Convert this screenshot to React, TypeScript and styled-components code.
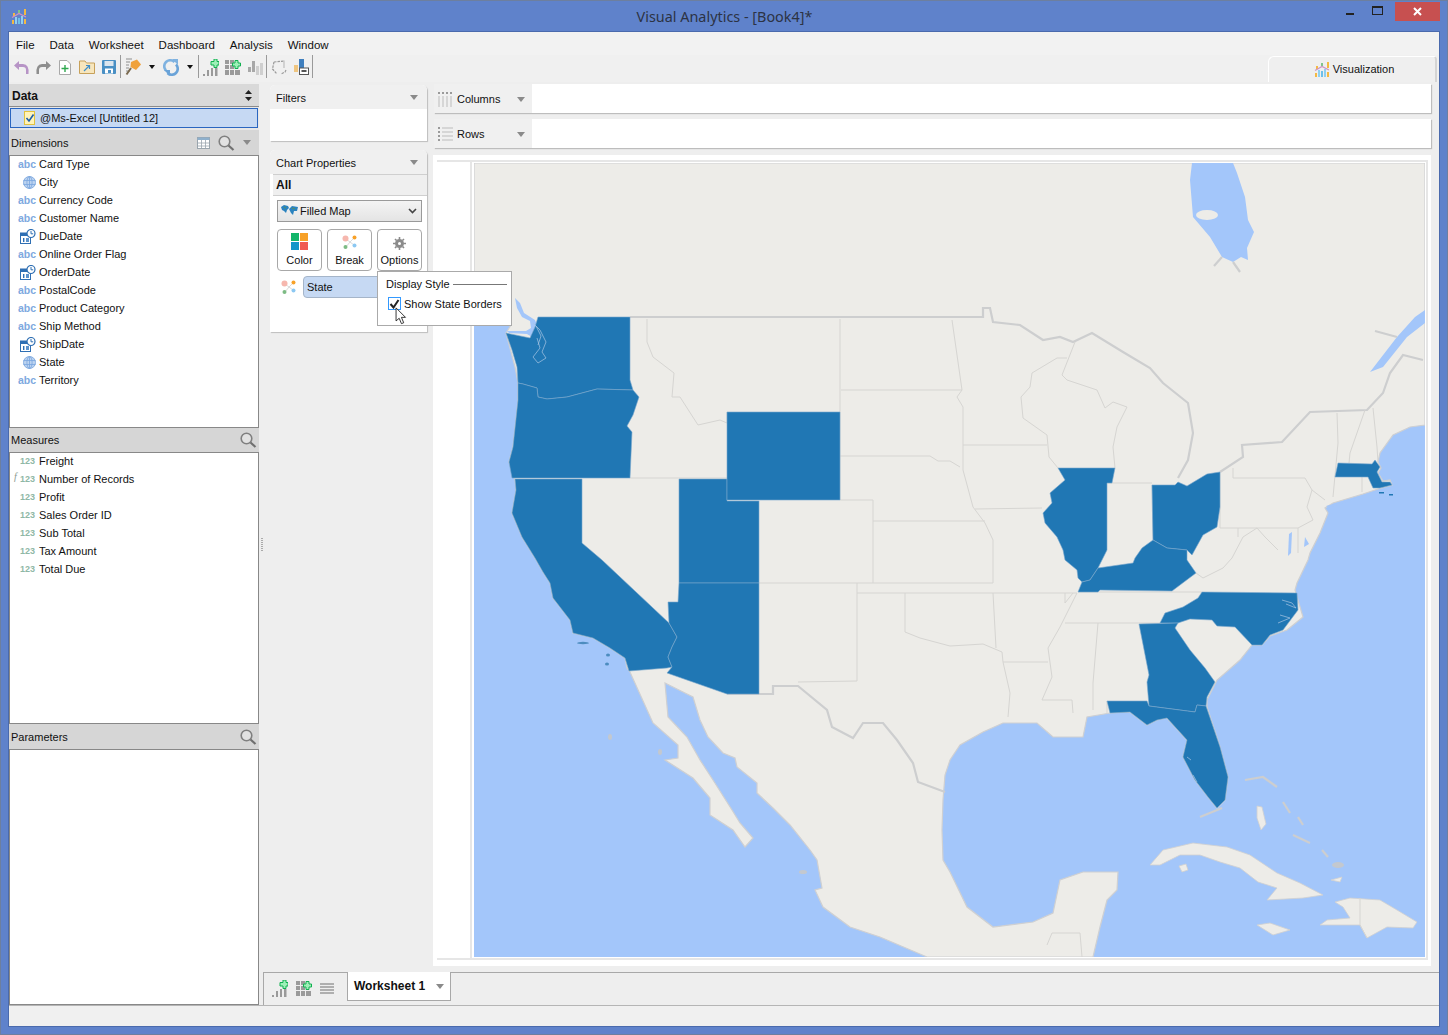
import React from 'react'
import styled, { createGlobalStyle } from 'styled-components'

const Global = createGlobalStyle`
  html, body {
    margin: 0;
    padding: 0;
    width: 1448px;
    height: 1035px;
    overflow: hidden;
    background: #5f82cb;
    font-family: "Liberation Sans", Arial, sans-serif;
    font-size: 11px;
    color: #111;
  }
`

const Frame = styled.div`
  display: flex;
  flex-direction: column;
  width: 1448px;
  height: 1035px;
  box-sizing: border-box;
  border: 1px solid #6d7f9f;
  background: #5f82cb;
`
const TitleBar = styled.div`
  display: flex;
  align-items: flex-start;
  position: relative;
  height: 30px;
  padding-left: 10px;
  flex: none;
`
const TitleLogo = styled.div`
  padding-top: 7px;
`
const TitleText = styled.div`
  flex: 1;
  text-align: center;
  font-family: "Noto Sans", "Liberation Sans", sans-serif;
  font-size: 14.4px;
  line-height: 31px;
  color: #2c3344;
  padding-left: 84px;
`
const WinButtons = styled.div`
  display: flex;
  align-items: flex-start;
`
const WinBtn = styled.div`
  width: 26px;
  height: 19px;
  display: flex;
  align-items: center;
  justify-content: center;
`
const CloseBtn = styled(WinBtn)`
  width: 45px;
  margin: 1px 7px 0 5px;
  background: #c75050;
`
const Content = styled.div`
  flex: 1;
  display: flex;
  flex-direction: column;
  min-height: 0;
  margin: 0 7px 7px 7px;
  border: 1px solid #4a6aad;
  background: #eeeeee;
`
const MenuBar = styled.div`
  display: flex;
  height: 23px;
  flex: none;
  align-items: center;
  padding: 2px 0 0 7px;
  box-sizing: border-box;
  gap: 15px;
  background: #f2f2f2;
  font-size: 11.5px;
  color: #111;
`
const ToolBar = styled.div`
  display: flex;
  height: 27px;
  flex: none;
  align-items: flex-start;
  padding-left: 1px;
  background: #f0f0f0;
  position: relative;
`
const Tool = styled.div`
  width: 22px;
  height: 24px;
  display: flex;
  align-items: center;
  justify-content: center;
`
const ToolDrop = styled.div<{ $w: number }>`
  width: ${p => p.$w}px;
  height: 24px;
  display: flex;
  align-items: center;
  justify-content: center;
  &::after {
    content: '';
    border: 3px solid transparent;
    border-top: 4px solid #111;
    margin-top: 3px;
  }
`
const ToolSep = styled.div`
  width: 1px;
  height: 23px;
  margin: 0 1px 0 0;
  background: #9a9a9a;
`
const VizTab = styled.div`
  margin-left: auto;
  margin-right: 2px;
  width: 169px;
  height: 26px;
  margin-top: 1px;
  box-sizing: border-box;
  padding: 0 0 2px 4px;
  border-top: 1px solid #fff;
  border-left: 1px solid #fff;
  border-right: 2px solid #d4d4d4;
  border-radius: 6px 4px 0 0;
  display: flex;
  align-items: center;
  justify-content: center;
  gap: 3px;
  font-size: 11px;
  background: #efefef;
`
const Main = styled.div`
  flex: 1;
  display: flex;
  min-height: 0;
  padding-top: 2px;
`
const LeftPanel = styled.div`
  width: 250px;
  flex: none;
  display: flex;
  flex-direction: column;
`
const DataHeader = styled.div`
  height: 23px;
  flex: none;
  display: flex;
  align-items: center;
  justify-content: space-between;
  padding: 1px 7px 0 3px;
  background: #d9d9d9;
  font-weight: 700;
  font-size: 12px;
  border-bottom: 1px solid #8b8b8b;
  box-sizing: border-box;
`
const SourceWrap = styled.div`
  height: 23px;
  flex: none;
  box-sizing: border-box;
  padding: 1px 1px 2px 1px;
  background: #e7e7e7;
`
const SourceRow = styled.div`
  height: 100%;
  box-sizing: border-box;
  display: flex;
  align-items: center;
  gap: 5px;
  padding-left: 13px;
  background: #c6d9f3;
  border: 1px solid #2a66c0;
  font-size: 11px;
`
const SectionHeader = styled.div<{ $h: number }>`
  height: ${p => p.$h}px;
  flex: none;
  display: flex;
  align-items: center;
  justify-content: space-between;
  box-sizing: border-box;
  padding: 0 2px 0 2px;
  background: #d6d6d6;
`
const HeaderTools = styled.div`
  display: flex;
  align-items: center;
  gap: 8px;
  margin-right: 6px;
`
const ListBox = styled.div<{ $h?: number }>`
  height: ${p => (p.$h ? `${p.$h}px` : 'auto')};
  flex: ${p => (p.$h ? 'none' : '1')};
  box-sizing: border-box;
  border: 1px solid #888;
  background: #fff;
`
const Row = styled.div`
  height: 18px;
  display: flex;
  align-items: center;
  box-sizing: border-box;
  padding: 0 0 2px 5px;
  white-space: nowrap;
  position: relative;
`
const TypeSlot = styled.div`
  width: 24px;
  flex: none;
  display: flex;
  justify-content: flex-end;
  padding-right: 3px;
  box-sizing: border-box;
`
const AbcTag = styled.span`
  color: #7ea9e0;
  font-size: 10.5px;
  line-height: 12px;
  font-weight: 700;
`
const NumTag = styled.span`
  color: #8fb8a6;
  font-size: 9px;
  font-weight: 700;
  line-height: 12px;
  position: relative;
  margin-right: 1px;
`
const FxTag = styled.span`
  position: absolute;
  left: -6px;
  top: -2px;
  color: #8a9a90;
  font-family: "Liberation Serif", serif;
  font-style: italic;
  font-size: 10px;
  font-weight: 400;
`
const Splitter = styled.div`
  width: 5px;
  flex: none;
  display: flex;
  align-items: center;
  justify-content: center;
  &::after {
    content: '';
    width: 2px;
    height: 14px;
    background: repeating-linear-gradient(#aaa 0 1px, transparent 1px 2px);
  }
`
const RightArea = styled.div`
  flex: 1;
  min-width: 0;
  display: flex;
  flex-direction: column;
`
const Workspace = styled.div`
  flex: 1;
  min-height: 0;
  display: flex;
  padding-left: 6px;
`
const SideColumn = styled.div`
  width: 157px;
  flex: none;
  padding-top: 1px;
  display: flex;
  flex-direction: column;
  gap: 9px;
  position: relative;
`
const Card = styled.div<{ $h: number }>`
  height: ${p => p.$h}px;
  flex: none;
  box-sizing: border-box;
  background: #fff;
  border-radius: 5px 5px 0 0;
  box-shadow: 1px 1px 1px #bdbdbd;
`
const CardHead = styled.div`
  height: 24px;
  display: flex;
  align-items: center;
  justify-content: space-between;
  padding: 1px 9px 0 6px;
  background: #f0f0f0;
  border-radius: 5px 5px 0 0;
  box-sizing: border-box;
`
const CardArrow = styled.span`
  border: 4px solid transparent;
  border-top: 5px solid #8a8a8a;
  margin-top: 4px;
`
const AllRow = styled.div`
  height: 22px;
  margin-left: 3px;
  display: flex;
  align-items: center;
  padding-left: 3px;
  background: #efefef;
  font-weight: 700;
  font-size: 12px;
  border-top: 1px solid #cfcfcf;
  border-bottom: 1px solid #cfcfcf;
  box-sizing: border-box;
`
const PropsBody = styled.div`
  padding: 4px 5px 0 7px;
`
const SelectBox = styled.div`
  height: 22px;
  box-sizing: border-box;
  border: 1px solid #9a9a9a;
  background: linear-gradient(#f4f4f4, #e4e4e4);
  display: flex;
  align-items: center;
  padding: 0 4px 0 3px;
  gap: 2px;
`
const Spread = styled.span`
  flex: 1;
`
const ButtonRow = styled.div`
  display: flex;
  gap: 5px;
  margin-top: 7px;
`
const PropButton = styled.div`
  width: 45px;
  height: 42px;
  box-sizing: border-box;
  border: 1px solid #a8a8a8;
  border-radius: 4px;
  display: flex;
  flex-direction: column;
  align-items: center;
  justify-content: flex-end;
  gap: 4px;
  padding-bottom: 4px;
  background: #fff;
`
const BreakRow = styled.div`
  display: flex;
  align-items: center;
  gap: 6px;
  margin-top: 5px;
  padding-left: 4px;
`
const Pill = styled.div`
  flex: 1;
  height: 22px;
  box-sizing: border-box;
  padding-left: 3px;
  margin-right: 20px;
  display: flex;
  align-items: center;
  background: #c6d9f3;
  border: 1px solid #a5b5c9;
  border-radius: 4px 0 0 4px;
`
const Popup = styled.div`
  position: absolute;
  left: 107px;
  top: 187px;
  width: 135px;
  height: 55px;
  box-sizing: border-box;
  padding: 4px 4px 0 8px;
  background: #fff;
  border: 1px solid #aaa;
  z-index: 5;
`
const PopTitle = styled.div`
  display: flex;
  align-items: center;
  gap: 3px;
  height: 16px;
  white-space: nowrap;
  &::after {
    content: '';
    flex: 1;
    height: 1px;
    background: #777;
  }
`
const CheckRow = styled.div`
  display: flex;
  align-items: center;
  gap: 3px;
  margin-top: 5px;
  padding-left: 2px;
  white-space: nowrap;
`
const CheckBox = styled.span`
  width: 13px;
  height: 13px;
  flex: none;
  box-sizing: border-box;
  border: 1px solid #3399ff;
  display: flex;
  align-items: center;
  justify-content: center;
`
const Pointer = styled.svg`
  position: absolute;
  left: 17px;
  top: 35px;
`
const ChartColumn = styled.div`
  flex: 1;
  min-width: 0;
  margin-left: 6px;
  margin-right: 8px;
  display: flex;
  flex-direction: column;
  gap: 6px;
`
const Shelf = styled.div`
  height: 29px;
  flex: none;
  margin-left: 1px;
  display: flex;
  background: #fff;
  box-shadow: 1px 1px 1px #bdbdbd;
`
const ShelfLabel = styled.div`
  width: 98px;
  flex: none;
  display: flex;
  align-items: center;
  gap: 4px;
  box-sizing: border-box;
  padding: 1px 7px 0 4px;
  background: #f0f0f0;
`
const ChartPanel = styled.div`
  height: 811px;
  flex: none;
  margin-top: 1px;
  box-sizing: border-box;
  padding: 5px 3px 0 4px;
  background: #fff;
`
const ChartInner = styled.div`
  display: flex;
  height: 800px;
  box-sizing: border-box;
  border-top: 2px solid #e6e6e6;
  border-bottom: 2px solid #e6e6e6;
  border-right: 2px solid #e6e6e6;
  padding: 1px 1px 0 0;
`
const AxisStrip = styled.div`
  width: 33px;
  flex: none;
  border-right: 2px solid #e6e6e6;
  margin: -1px 2px 0 0;
`
const MapSvg = styled.svg`
  display: block;
  flex: none;
`
const TabBar = styled.div`
  height: 33px;
  flex: none;
  display: flex;
  align-items: flex-start;
  margin-left: -1px;
  padding-left: 8px;
  box-sizing: border-box;
  border-top: 1px solid #a8a8a8;
  border-left: 1px solid #a8a8a8;
`
const TabIcons = styled.div`
  display: flex;
  gap: 8px;
  height: 30px;
  align-items: center;
  width: 75px;
`
const SheetTab = styled.div`
  width: 104px;
  height: 29px;
  margin-top: -1px;
  box-sizing: border-box;
  background: #fff;
  border: 1px solid #a8a8a8;
  border-top: none;
  display: flex;
  align-items: center;
  justify-content: space-between;
  padding: 0 6px 0 6px;
  font-weight: 700;
  font-size: 12px;
`
const StatusBar = styled.div`
  height: 21px;
  flex: none;
  background: #f0f0f0;
  border-top: 1px solid #b5b5b5;
  box-sizing: border-box;
`

const VizLogo = ({ size = 16 }: { size?: number }) => (
  <svg width={size} height={size} viewBox="0 0 16 16">
    <rect x="1" y="12" width="2" height="4" fill="#f4b942" />
    <rect x="4" y="9" width="2" height="7" fill="#8fd0f0" />
    <rect x="7" y="10" width="2" height="6" fill="#6ec0ea" />
    <rect x="10" y="8" width="2" height="8" fill="#8fd0f0" />
    <rect x="13" y="11" width="2" height="5" fill="#f4b942" />
    <rect x="7" y="2" width="2" height="3" fill="#7fc48a" />
    <rect x="13" y="1" width="2" height="6" fill="#f4b942" />
    <rect x="2" y="5" width="2" height="3" fill="#f4b942" />
    <path d="M1 9.5 L8 5.5 L15 9" fill="none" stroke="#cf93c4" strokeWidth="1.3" />
  </svg>
)

const Undo = ({ color }: { color: string }) => (
  <svg width="17" height="15" viewBox="0 0 17 15">
    <path d="M6 1 L1 5.5 L6 10 V7 H10 Q13 7 13 10 V14 H15.5 Q16.5 4.5 10 4 H6 Z" fill={color} />
  </svg>
)
const Redo = ({ color }: { color: string }) => (
  <svg width="17" height="15" viewBox="0 0 17 15">
    <path d="M11 1 L16 5.5 L11 10 V7 H7 Q4 7 4 10 V14 H1.5 Q0.5 4.5 7 4 H11 Z" fill={color} />
  </svg>
)
const NewDoc = () => (
  <svg width="12" height="15" viewBox="0 0 12 15">
    <path d="M.5.5 H8 L11.5 4 V14.5 H.5 Z" fill="#fff" stroke="#a9a9a9" />
    <path d="M6 5 V12 M2.5 8.5 H9.5" stroke="#2fa84f" strokeWidth="1.4" />
  </svg>
)
const OpenFolder = () => (
  <svg width="16" height="14" viewBox="0 0 16 14">
    <path d="M.5 1 H6 L7.5 3 H15.5 V13.5 H.5 Z" fill="#f7e6bd" stroke="#c7a15a" />
    <path d="M5 11 L10 6 M7 5.5 H10.5 V9" fill="none" stroke="#3f8fc9" strokeWidth="1.2" />
  </svg>
)
const Save = () => (
  <svg width="14" height="14" viewBox="0 0 14 14">
    <rect width="14" height="14" rx="1" fill="#4a90c4" />
    <rect x="2.5" y="1" width="9" height="5" fill="#dce6ee" />
    <rect x="3" y="8.5" width="8" height="5" fill="#fff" />
    <rect x="6" y="10" width="3" height="3" fill="#4a90c4" />
  </svg>
)
const Plug = () => (
  <svg width="17" height="18" viewBox="0 0 17 18">
    <path d="M6 4 L12 1.5 L16 6.5 L11 12 L5.5 9 Z" fill="#f0a23c" />
    <path d="M1 1 H7 M1 4 H5 M1 7 H4 M1 10 H4 M1 13 H5" stroke="#8d8d8d" strokeWidth="1.1" />
    <path d="M6 10 L1.5 16.5" stroke="#7a6a4f" strokeWidth="2" />
  </svg>
)
const Refresh = () => (
  <svg width="16" height="17" viewBox="0 0 16 17">
    <path d="M11.5 3 A6 6 0 0 0 3 11.5" fill="none" stroke="#7fb2e0" strokeWidth="2.6" />
    <path d="M4.5 14 A6 6 0 0 0 13 5.5" fill="none" stroke="#6aa3d8" strokeWidth="2.6" />
    <path d="M9 0 H15 V6 Z" fill="#7fb2e0" />
    <path d="M1 11 H7 V17 Z" fill="#6aa3d8" />
  </svg>
)
const Bars = ({ add }: { add?: boolean }) => (
  <svg width="16" height="17" viewBox="0 0 16 17">
    <rect x="0" y="15" width="2" height="2" fill="#9a9a9a" />
    <rect x="4" y="11" width="2" height="6" fill="#9a9a9a" />
    <rect x="8" y="9" width="2" height="8" fill="#9a9a9a" />
    <rect x="12" y="9" width="2.5" height="8" fill="#9a9a9a" />
    {add && <path d="M8 2.5 H11 V0 H14 V2.5 H16 V6 H14 V8.5 H11 V6 H8 Z" fill="#9ff0b8" stroke="#10b050" strokeWidth="1" />}
  </svg>
)
const GridAdd = () => (
  <svg width="16" height="15" viewBox="0 0 16 15">
    <path d="M0 0 H4 V4 H0 Z M5 0 H9 V4 H5 Z M0 5 H4 V9 H0 Z M5 5 H9 V9 H5 Z M0 10 H4 V15 H0 Z M5 10 H9 V15 H5 Z M10 10 H15 V15 H10 Z" fill="#9a9a9a" />
    <path d="M7.5 3 H10 V.5 H13 V3 H15.5 V6 H13 V8.5 H10 V6 H7.5 Z" fill="#9ff0b8" stroke="#10b050" />
  </svg>
)
const GrayBars = () => (
  <svg width="15" height="15" viewBox="0 0 15 15">
    <rect x="0" y="7" width="3" height="5" fill="#a8a8a8" />
    <rect x="4" y="1" width="3" height="11" fill="#a8a8a8" />
    <rect x="8" y="6" width="3" height="9" fill="#cfcfcf" />
    <rect x="12" y="3" width="3" height="12" fill="#cfcfcf" />
  </svg>
)
const Shape = () => (
  <svg width="16" height="16" viewBox="0 0 16 16">
    <path d="M3 3 L13 2 M3 3 L1.5 10 L6 15 M15 11 L14 13 L10 15" fill="none" stroke="#9a9a9a" strokeWidth="1.2" strokeDasharray="2.5 1" />
    <path d="M13 1.5 V9" stroke="#c4c4c4" strokeWidth="1.4" />
  </svg>
)
const Format = () => (
  <svg width="15" height="16" viewBox="0 0 15 16">
    <rect x="0" y="6" width="4" height="7" fill="#efc57f" />
    <rect x="5" y="0" width="5" height="9" fill="#3f7fbe" />
    <rect x="5.5" y="9" width="9" height="6.5" fill="#fff" stroke="#555" />
    <rect x="7.5" y="11" width="5" height="2" fill="#555" />
  </svg>
)
const TableIcon = () => (
  <svg width="13" height="12" viewBox="0 0 13 12">
    <rect x=".5" y=".5" width="12" height="11" fill="#fff" stroke="#9aa5ad" />
    <rect x=".5" y=".5" width="12" height="2.5" fill="#8fb0cc" />
    <path d="M.5 6 H12.5 M.5 9 H12.5 M4.5 3 V11.5 M8.5 3 V11.5" stroke="#9aa5ad" strokeWidth=".8" />
  </svg>
)
const SearchIcon = () => (
  <svg width="17" height="16" viewBox="0 0 17 16">
    <circle cx="6.5" cy="6.5" r="5.3" fill="#f4f4f4" fillOpacity=".4" stroke="#808080" strokeWidth="1.6" />
    <path d="M10.5 10.5 L15.5 15" stroke="#707070" strokeWidth="2.2" />
  </svg>
)
const GreyArrow = styled.span`
  display: inline-block;
  border: 4px solid transparent;
  border-top: 5px solid #8a8a8a;
  margin-top: 4px;
`
const Globe = () => (
  <svg width="13" height="13" viewBox="0 0 13 13">
    <circle cx="6.5" cy="6.5" r="6" fill="#bcd3f0" stroke="#86aee0" />
    <ellipse cx="6.5" cy="6.5" rx="2.6" ry="6" fill="none" stroke="#7aa6de" strokeWidth=".8" />
    <path d="M.5 4.5 H12.5 M.5 8.5 H12.5 M6.5 .5 V12.5" stroke="#7aa6de" strokeWidth=".8" />
  </svg>
)
const CalClock = () => (
  <svg width="16" height="15" viewBox="0 0 16 15">
    <rect x=".5" y="4" width="10" height="10.5" fill="#fff" stroke="#2f6fb3" />
    <rect x=".5" y="4" width="10" height="3" fill="#2f6fb3" />
    <rect x="3" y="9" width="1.4" height="4" fill="#2f6fb3" />
    <rect x="6" y="9" width="3" height="4" fill="#5d93cc" />
    <circle cx="11" cy="4.5" r="4" fill="#fff" stroke="#2f6fb3" strokeWidth="1.2" />
    <path d="M11 2 V4.8 H13.2" fill="none" stroke="#2f6fb3" />
  </svg>
)
const SourceIcon = () => (
  <svg width="11" height="14" viewBox="0 0 11 14">
    <rect x=".5" y=".5" width="10" height="13" fill="#fff3b8" stroke="#e2c23e" />
    <path d="M2.5 7 L5 10 L9.5 3.5" fill="none" stroke="#1f5fa8" strokeWidth="1.6" />
  </svg>
)
const Updown = () => (
  <svg width="7" height="11" viewBox="0 0 7 11">
    <path d="M3.5 0 L7 4 H0 Z M3.5 11 L0 7 H7 Z" fill="#222" />
  </svg>
)
const ColorIcon = () => (
  <svg width="17" height="17" viewBox="0 0 17 17">
    <rect width="8" height="8" fill="#12b56a" />
    <rect x="9" width="8" height="8" fill="#f7a128" />
    <rect y="9" width="8" height="8" fill="#1195c9" />
    <rect x="9" y="9" width="8" height="8" fill="#f05a50" />
  </svg>
)
const BreakIcon = () => (
  <svg width="16" height="15" viewBox="0 0 16 15">
    <path d="M4 4 L8 7 M12 3 L8 7 M4 12 L8 7 M12 10 L8 7" stroke="#ccc" strokeWidth=".7" />
    <circle cx="3.5" cy="3.5" r="3" fill="#f6b7ae" />
    <circle cx="12.5" cy="2.5" r="2" fill="#f7a128" />
    <circle cx="3.5" cy="12" r="2" fill="#7dbb84" />
    <circle cx="12.5" cy="10.5" r="2" fill="#8cc8f2" />
  </svg>
)
const Gear = () => (
  <svg width="13" height="13" viewBox="0 0 13 13">
    <circle cx="6.5" cy="6.5" r="3" fill="none" stroke="#8b8b8b" strokeWidth="3" />
    <path d="M6.5 0 V13 M0 6.5 H13 M2 2 L11 11 M11 2 L2 11" stroke="#8b8b8b" strokeWidth="1.6" strokeDasharray="2.2 8.6" />
  </svg>
)
const WorldIcon = () => (
  <svg width="17" height="12" viewBox="0 0 17 12">
    <path d="M0 2 L3 0 L7 1 L8 3 L6 5 L5 8 L3 6 L1 5 Z M8 4 L11 1 L17 2 L16 6 L13 6 L12 10 L10 8 L9 6 Z" fill="#2b83bf" />
    <path d="M3 2 L5 3 M11 3 L14 4" stroke="#5a8f5a" strokeWidth="1" />
  </svg>
)
const ColumnsIcon = () => (
  <svg width="15" height="15" viewBox="0 0 15 15">
    {[0, 4, 8, 12].map(x => (
      <g key={x}>
        <rect x={x} y="0" width="2" height="2" fill="#9a9a9a" />
        <rect x={x} y="4" width="2" height="11" fill="#d6d6d6" />
      </g>
    ))}
  </svg>
)
const RowsIcon = () => (
  <svg width="15" height="15" viewBox="0 0 15 15">
    {[0, 4, 8, 12].map(y => (
      <g key={y}>
        <rect x="0" y={y} width="2" height="2" fill="#9a9a9a" />
        <rect x="4" y={y} width="11" height="2" fill="#d6d6d6" />
      </g>
    ))}
  </svg>
)
const ListLines = () => (
  <svg width="14" height="11" viewBox="0 0 14 11">
    <path d="M0 1 H14 M0 4 H14 M0 7 H14 M0 10 H14" stroke="#9a9a9a" strokeWidth="1.6" />
  </svg>
)

type Kind = 'abc' | 'geo' | 'date'
const dimensions: [string, Kind][] = [
  ['Card Type', 'abc'],
  ['City', 'geo'],
  ['Currency Code', 'abc'],
  ['Customer Name', 'abc'],
  ['DueDate', 'date'],
  ['Online Order Flag', 'abc'],
  ['OrderDate', 'date'],
  ['PostalCode', 'abc'],
  ['Product Category', 'abc'],
  ['Ship Method', 'abc'],
  ['ShipDate', 'date'],
  ['State', 'geo'],
  ['Territory', 'abc'],
]
const measures = ['Freight', 'Number of Records', 'Profit', 'Sales Order ID', 'Sub Total', 'Tax Amount', 'Total Due']

const LAND = `474,163 1425,163 1425,425 1410,427 1393,435 1380,453 1378,462 1381,468 1378,473 1383,481 1390,480 1392,485 1378,489 1363,494 1333,503
1325,508 1328,513 1320,533 1310,553 1308,560 1297,583 1295,590 1303,617 1287,630 1270,636 1262,645 1252,645 1240,660 1217,680 1207,700 1207,707 1220,747 1228,777 1225,800 1217,808
1208,797 1195,780 1183,757 1187,740 1167,718 1157,720 1147,725 1130,712 1110,713 1087,717 1083,737 1053,737 1037,723 1003,723 983,732 960,745 950,760 945,775 943,800 942,830 943,860 950,872
967,907 993,927 1033,922 1053,913 1060,880 1083,872 1118,872 1117,890 1107,900 1100,927 1093,957 927,957 880,937 850,927 823,907 815,890 822,888 817,860 810,850 790,825 773,808 757,793 757,783 737,767 735,758 723,753 708,737
700,720 693,697 683,692 665,683 668,717 687,737 700,760 713,780 732,810 740,823 753,838 745,847 733,830 710,815 710,798 693,778 665,760 678,758 678,745 653,723 630,672
627,668 625,658 610,648 593,638 573,633 570,620 553,598 550,583 543,572 535,558 522,537 512,513 516,490 515,480 509,462 513,447 518,400 518,383 515,367 506,333 511,325 500,300 474,285`

const LAKES = [
  '1192,163 1233,163 1237,173 1245,197 1248,220 1254,232 1247,248 1248,260 1241,257 1233,262 1222,257 1210,237 1193,217 1190,180',
  '1370,372 1397,337 1415,317 1425,310 1425,323 1407,337 1383,367',
  '515,298 520,303 524,313 535,320 538,327 534,331 532,337 527,334 509,333 507,331 526,331 531,328 530,321 522,317 517,308',
  '1289,534 1292,532 1291,553 1288,556',
  '1305,537 1309,544 1304,547',
  '1326,506 1345,501 1361,496 1345,503 1329,508',
]
const ISLANDS = [
  '1150,865 1163,850 1193,843 1227,847 1250,855 1277,873 1300,883 1323,895 1303,898 1267,900 1277,888 1258,882 1240,868 1220,862 1200,855 1180,855 1160,865',
  '1335,902 1350,898 1380,900 1397,910 1417,922 1413,928 1387,927 1367,938 1360,925 1320,925 1327,920 1350,918 1343,907',
  '1257,925 1270,923 1290,930 1273,935',
  '1179,866 1186,864 1188,870 1182,872',
  '1257,806 1262,807 1266,824 1261,830 1257,818',
  '1331,880 1342,877 1340,882',
]
const STATES = {
  wa: '538,317 630,317 630,380 633,390 597,389 567,397 547,399 538,397 537,388 523,384 518,383 517,367 512,350 506,333 530,338 535,327',
  or: '518,383 523,384 537,388 538,397 547,399 567,397 597,389 633,390 639,397 633,415 627,426 632,432 630,478 512,478 509,462 513,447 518,400',
  ca: '515,479 582,479 582,543 602,560 669,623 677,637 672,647 668,657 672,667 667,668 629,671 625,658 610,648 593,638 573,633 570,620 553,598 550,583 543,572 535,558 522,537 512,513 516,490',
  ut: '679,479 727,479 727,501 759,501 759,583 679,583',
  wy: '727,412 840,412 840,500 727,500',
  az: '679,583 759,583 759,694 727,694 667,673 672,667 668,657 672,647 677,637 669,623 668,602 678,602',
  il: '1058,468 1115,468 1112,483 1107,483 1107,537 1107,550 1102,560 1098,568 1090,580 1082,582 1078,578 1077,570 1065,560 1063,550 1057,537 1045,523 1043,513 1052,503 1050,493 1065,480',
  oh: '1152,485 1175,485 1178,482 1187,486 1207,474 1220,472 1220,507 1217,527 1203,535 1192,555 1187,550 1167,548 1153,540',
  ky: '1153,540 1167,548 1187,550 1187,560 1196,573 1172,591 1100,590 1098,592 1078,592 1082,582 1090,580 1098,568 1133,563 1135,558 1142,548',
  nc: '1202,592 1297,593 1298,610 1283,630 1270,635 1262,645 1252,645 1235,627 1217,626 1212,620 1190,619 1178,623 1160,623 1165,613 1183,607 1198,598',
  ga: '1139,624 1178,623 1175,628 1190,650 1205,668 1215,682 1207,697 1206,706 1197,705 1195,712 1149,706 1147,682 1149,675',
  fl: '1107,701 1147,701 1149,706 1195,712 1197,705 1206,706 1220,747 1228,777 1225,800 1217,808 1208,797 1195,780 1183,757 1187,740 1167,718 1157,720 1147,725 1130,712 1110,713',
  ma: '1338,463 1372,464 1375,460 1380,467 1377,472 1382,482 1390,482 1392,485 1380,488 1373,488 1368,477 1335,477',
}
const THIN = [
  '647,319 647,342 653,357 674,373 672,397 680,397 698,425 720,420 727,423 727,412',
  '630,478 727,478',
  '840,319 840,412 840,500 873,500 873,583',
  '841,390 962,390',
  '840,456 930,456 938,461 950,461 960,467',
  '873,521 985,521',
  '759,583 993,583',
  '857,583 857,681 798,682',
  '857,593 905,593 905,632 920,638 950,646 967,645 983,644 1002,652 1003,662 1010,693 1008,717',
  '905,593 1077,593',
  '993,583 993,540 985,523 973,507 963,470 963,407 957,397 962,390 952,320',
  '963,445 1047,445',
  '975,509 1042,508',
  '993,593 996,648',
  '1003,662 1048,662',
  '1065,593 1065,603 1073,593',
  '1077,593 1060,627 1048,648 1052,677 1042,700 1072,700 1073,713',
  '1065,623 1160,623',
  '1098,623 1093,683 1093,710',
  '1107,701 1107,713',
  '1078,592 1202,592',
  '1196,573 1203,578 1223,568 1232,558 1243,537 1257,528 1265,537 1278,550',
  '1220,528 1298,528 1298,553',
  '1238,537 1238,528',
  '1233,478 1305,478 1312,490 1325,500',
  '1233,468 1233,478',
  '1220,472 1220,528',
  '1337,413 1338,443 1333,497',
  '1362,477 1362,492',
  '1312,490 1307,507 1313,520 1298,528',
  '1365,410 1350,453 1349,463',
  '1373,408 1377,447 1378,462',
  '1075,342 1062,375 1067,380 1097,390 1105,408 1113,402 1127,407 1117,427 1113,447 1115,468',
  '1067,358 1057,358 1032,373 1030,387 1021,397 1023,418 1047,435 1049,457 1058,468',
  '1107,483 1152,483',
  '1152,485 1153,540',
  '1047,945 1052,933 1080,933 1082,957',
  '1360,898 1360,925 1367,938',
]
const THICK = [
  '630,317 983,317 983,308 990,308 993,322 1020,325 1043,340 1060,337 1073,342 1092,333 1123,352 1150,368 1163,383 1188,403 1193,433 1188,460 1178,478',
  '1220,472 1243,457 1242,445 1282,442 1310,412 1367,410 1383,393 1390,373 1403,355 1423,360',
  '727,694 773,694 773,686 798,686 827,710 832,727 853,738 863,723 883,723 897,740 913,763 918,782 945,792',
  '1222,257 1214,266',
  '1233,262 1240,272',
  '1375,331 1397,337',
  '1245,780 1263,777 1277,787',
  '1283,802 1290,813',
  '1298,817 1303,825',
  '1293,835 1310,843',
  '1322,850 1328,857',
  '1200,817 1222,808',
]
const SOUNDS = [
  '533,323 540,330 546,342 542,352 546,358 538,363 533,357 540,348 537,338',
  '536,326 541,336 538,345',
  '1282,600 1292,603 1296,608 1286,604',
  '1280,615 1290,618 1278,623',
  '1187,757 1191,760',
  '1193,775 1197,782',
]
const SPECKS = [
  [1338, 865, 6, 3],
  [610, 737, 2, 3],
  [660, 752, 2, 3],
  [803, 872, 4, 2],
]

const MapChart = () => (
  <MapSvg width="951" height="794" viewBox="474 163 951 794">
    <defs>
      <filter id="soft" x="0" y="0" width="100%" height="100%">
        <feGaussianBlur stdDeviation=".55" />
      </filter>
    </defs>
    <rect x="474" y="163" width="951" height="794" fill="#a3c6fa" />
    <g filter="url(#soft)">
      <polygon points={LAND} fill="#edece8" stroke="#cfd0d2" strokeWidth="1.2" />
      {LAKES.map((p, i) => (
        <polygon key={i} points={p} fill="#a3c6fa" />
      ))}
      <ellipse cx="1207" cy="215" rx="11" ry="5" fill="#edece8" />
      {ISLANDS.map((p, i) => (
        <polygon key={i} points={p} fill="#edece8" stroke="#d0d0d0" strokeWidth=".8" />
      ))}
      {SPECKS.map(([x, y, rx, ry], i) => (
        <ellipse key={i} cx={x} cy={y} rx={rx} ry={ry} fill="#c3c8cf" />
      ))}
      {THICK.map((p, i) => (
        <polyline key={i} points={p} fill="none" stroke="#cdcecf" strokeWidth="2.2" />
      ))}
    </g>
    {THIN.map((p, i) => (
      <polyline key={i} points={p} fill="none" stroke="#d6d5d2" strokeWidth="1" />
    ))}
    {Object.entries(STATES).map(([k, p]) => (
      <polygon key={k} points={p} fill="#2077b4" stroke="#7aa8cc" strokeWidth=".6" />
    ))}
    {SOUNDS.map((p, i) => (
      <polyline key={i} points={p} fill="none" stroke="#a9c6e4" strokeWidth=".7" />
    ))}
    <ellipse cx="583" cy="643" rx="6" ry="1.2" fill="#4c8cbf" />
    <ellipse cx="608" cy="655" rx="2" ry="1.5" fill="#4c8cbf" />
    <ellipse cx="607" cy="664" rx="2" ry="1.5" fill="#4c8cbf" />
    <rect x="1379" y="492" width="5" height="1.5" fill="#2077b4" />
    <rect x="1389" y="494" width="4" height="1.5" fill="#2077b4" />
  </MapSvg>
)

const DimIcon = ({ kind }: { kind: Kind }) => {
  if (kind === 'geo') return <Globe />
  if (kind === 'date') return <CalClock />
  return <AbcTag>abc</AbcTag>
}

const App = () => {
  return (
    <Frame>
      <Global />
      <TitleBar>
        <TitleLogo>
          <VizLogo />
        </TitleLogo>
        <TitleText>Visual Analytics - [Book4]*</TitleText>
        <WinButtons>
          <WinBtn>
            <svg width="10" height="10" viewBox="0 0 10 10">
              <rect x="0" y="7" width="8" height="2" fill="#222" />
            </svg>
          </WinBtn>
          <WinBtn>
            <svg width="11" height="9" viewBox="0 0 11 9">
              <rect x=".5" y=".5" width="10" height="8" fill="none" stroke="#222" />
              <rect x="0" y="0" width="11" height="2" fill="#222" />
            </svg>
          </WinBtn>
          <CloseBtn>
            <svg width="9" height="9" viewBox="0 0 9 9">
              <path d="M1 1 L8 8 M8 1 L1 8" stroke="#fff" strokeWidth="2" />
            </svg>
          </CloseBtn>
        </WinButtons>
      </TitleBar>
      <Content>
        <MenuBar>
          <span>File</span>
          <span>Data</span>
          <span>Worksheet</span>
          <span>Dashboard</span>
          <span>Analysis</span>
          <span>Window</span>
        </MenuBar>
        <ToolBar>
          <Tool>
            <Undo color="#b794c6" />
          </Tool>
          <Tool>
            <Redo color="#8e8e8e" />
          </Tool>
          <Tool>
            <NewDoc />
          </Tool>
          <Tool>
            <OpenFolder />
          </Tool>
          <Tool>
            <Save />
          </Tool>
          <ToolSep />
          <Tool>
            <Plug />
          </Tool>
          <ToolDrop $w={16} />
          <Tool>
            <Refresh />
          </Tool>
          <ToolDrop $w={16} />
          <ToolSep />
          <Tool>
            <Bars add />
          </Tool>
          <Tool>
            <GridAdd />
          </Tool>
          <Tool>
            <GrayBars />
          </Tool>
          <ToolSep />
          <Tool>
            <Shape />
          </Tool>
          <Tool>
            <Format />
          </Tool>
          <ToolSep />
          <VizTab>
            <VizLogo />
            <span>Visualization</span>
          </VizTab>
        </ToolBar>
        <Main>
          <LeftPanel>
            <DataHeader>
              <span>Data</span>
              <Updown />
            </DataHeader>
            <SourceWrap>
              <SourceRow>
                <SourceIcon />
                <span>@Ms-Excel [Untitled 12]</span>
              </SourceRow>
            </SourceWrap>
            <SectionHeader $h={25}>
              <span>Dimensions</span>
              <HeaderTools>
                <TableIcon />
                <SearchIcon />
                <GreyArrow />
              </HeaderTools>
            </SectionHeader>
            <ListBox $h={273}>
              {dimensions.map(([name, kind]) => (
                <Row key={name}>
                  <TypeSlot>
                    <DimIcon kind={kind} />
                  </TypeSlot>
                  <span>{name}</span>
                </Row>
              ))}
            </ListBox>
            <SectionHeader $h={24}>
              <span>Measures</span>
              <SearchIcon />
            </SectionHeader>
            <ListBox $h={272}>
              {measures.map(name => (
                <Row key={name}>
                  <TypeSlot>
                    <NumTag>
                      {name === 'Number of Records' && <FxTag>f</FxTag>}
                      123
                    </NumTag>
                  </TypeSlot>
                  <span>{name}</span>
                </Row>
              ))}
            </ListBox>
            <SectionHeader $h={25}>
              <span>Parameters</span>
              <SearchIcon />
            </SectionHeader>
            <ListBox />
          </LeftPanel>
          <Splitter />
          <RightArea>
            <Workspace>
              <SideColumn>
                <Card $h={56}>
                  <CardHead>
                    <span>Filters</span>
                    <CardArrow />
                  </CardHead>
                </Card>
                <Card $h={182}>
                  <CardHead>
                    <span>Chart Properties</span>
                    <CardArrow />
                  </CardHead>
                  <AllRow>All</AllRow>
                  <PropsBody>
                    <SelectBox>
                      <WorldIcon />
                      <span>Filled Map</span>
                      <Spread />
                      <svg width="9" height="6" viewBox="0 0 9 6">
                        <path d="M1 1 L4.5 4.5 L8 1" fill="none" stroke="#444" strokeWidth="1.6" />
                      </svg>
                    </SelectBox>
                    <ButtonRow>
                      <PropButton>
                        <ColorIcon />
                        <span>Color</span>
                      </PropButton>
                      <PropButton>
                        <BreakIcon />
                        <span>Break</span>
                      </PropButton>
                      <PropButton>
                        <Gear />
                        <span>Options</span>
                      </PropButton>
                    </ButtonRow>
                    <BreakRow>
                      <BreakIcon />
                      <Pill>State</Pill>
                    </BreakRow>
                  </PropsBody>
                </Card>
                <Popup>
                  <PopTitle>Display Style</PopTitle>
                  <CheckRow>
                    <CheckBox>
                      <svg width="11" height="10" viewBox="0 0 11 10">
                        <path d="M1.5 5 L4.5 8.5 L9.5 1" fill="none" stroke="#222" strokeWidth="2" />
                      </svg>
                    </CheckBox>
                    <span>Show State Borders</span>
                  </CheckRow>
                  <Pointer width="12" height="18" viewBox="0 0 13 20">
                    <path d="M1 1 V15.5 L4.5 12.5 L7 18.5 L9.5 17.5 L7 11.5 H11.5 Z" fill="#fff" stroke="#222" strokeWidth="1" />
                  </Pointer>
                </Popup>
              </SideColumn>
              <ChartColumn>
                <Shelf>
                  <ShelfLabel>
                    <ColumnsIcon />
                    <span>Columns</span>
                    <Spread />
                    <CardArrow />
                  </ShelfLabel>
                </Shelf>
                <Shelf>
                  <ShelfLabel>
                    <RowsIcon />
                    <span>Rows</span>
                    <Spread />
                    <CardArrow />
                  </ShelfLabel>
                </Shelf>
                <ChartPanel>
                  <ChartInner>
                    <AxisStrip />
                    <MapChart />
                  </ChartInner>
                </ChartPanel>
              </ChartColumn>
            </Workspace>
            <TabBar>
              <TabIcons>
                <Bars add />
                <GridAdd />
                <ListLines />
              </TabIcons>
              <SheetTab>
                <span>Worksheet 1</span>
                <GreyArrow />
              </SheetTab>
            </TabBar>
          </RightArea>
        </Main>
        <StatusBar />
      </Content>
    </Frame>
  )
}

export default App
